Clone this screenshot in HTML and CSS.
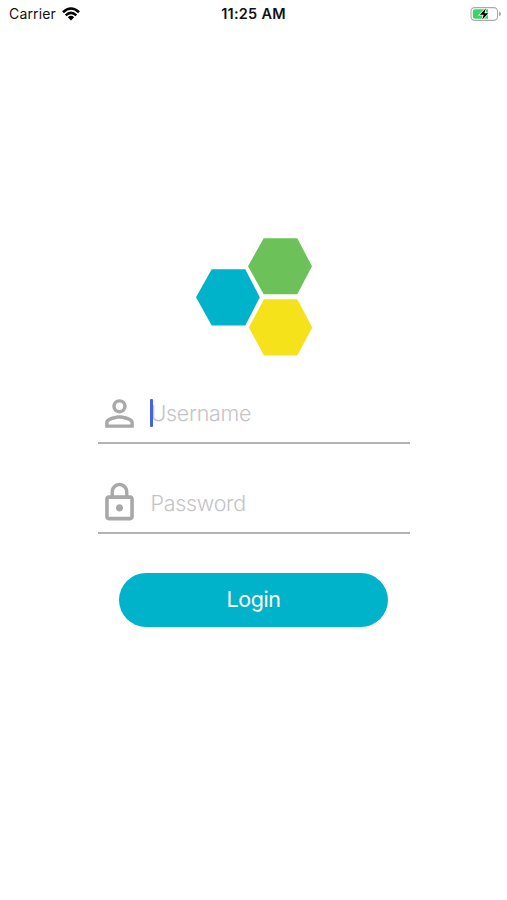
FILE: index.html
```
<!DOCTYPE html>
<html lang="en">
<head>
    <meta charset="UTF-8">
    <meta name="viewport" content="width=device-width, initial-scale=1.0">
    <title>Login</title>
    <link rel="stylesheet" href="styles.css">
</head>
<body>
    <!-- status bar -->
    <header class="status">
        <div class="carrier">
            <span class="carrier-name">Carrier</span>
            <svg class="wifi" viewBox="0 0 18 14">
                <path d="M1 5.2Q9-2.2 17 5.2" fill="none" stroke="#000" stroke-width="2.6"/>
                <path d="M3.7 8.3Q9 3.4 14.3 8.3" fill="none" stroke="#000" stroke-width="2.5"/>
                <path d="M9 13.4L5.8 10.2Q9 7.5 12.2 10.2z"/>
            </svg>
        </div>
        <span class="time">11:25 AM</span>
        <svg class="battery" viewBox="0 0 32 16">
            <rect x="1" y="1.6" width="26.5" height="12.8" rx="3.8" fill="#fff" stroke="#aaa" stroke-width="1.1"/>
            <path d="M5.2 3.2H18V12.8H5.2A2.4 2.4 0 0 1 2.8 10.4V5.6A2.4 2.4 0 0 1 5.2 3.2z" fill="#3fd268"/>
            <path d="M29 5.6Q31 6.6 31 8T29 10.4z" fill="#aaa"/>
            <path d="M15.9 2.2L9.8 8.7H13.7L12.1 13.8L18.4 7.3H14.4z" stroke="#fff" stroke-width="1.6" paint-order="stroke"/>
        </svg>
    </header>
    <main class="container">
        <svg class="logo" viewBox="0 0 118 120">
            <path d="M1 60.3L16.7 32.2H50.3L64.8 60.3L50.3 88.4H16.7z" fill="#00b2ca"/>
            <path d="M53 29.3L68.7 1.3H102.3L117 29.3L102.3 57.3H68.7z" fill="#6cc158"/>
            <path d="M53.8 90.5L69 62.3H102.3L117.3 90.5L102.3 118.5H69z" fill="#f5e21b"/>
        </svg>
        <form class="form">
            <label class="field">
                <svg class="icon" viewBox="0 0 24 24">
                    <path d="M12 5.9a2.1 2.1 0 1 1 0 4.2 2.1 2.1 0 0 1 0-4.2m0 9c2.97 0 6.1 1.46 6.1 2.1v1.1H5.9V17c0-.64 3.13-2.1 6.1-2.1M12 4C9.79 4 8 5.79 8 8s1.79 4 4 4 4-1.79 4-4-1.79-4-4-4zm0 9c-2.67 0-8 1.34-8 4v3h16v-3c0-2.66-5.33-4-8-4z"/>
                </svg>
                <span class="cursor"></span>
                <input class="input" type="text" placeholder="Username">
            </label>
            <label class="field">
                <svg class="icon" viewBox="0 0 24 24">
                    <path d="M12 17c1.1 0 2-.9 2-2s-.9-2-2-2-2 .9-2 2 .9 2 2 2zm6-9h-1V6c0-2.76-2.24-5-5-5S7 3.24 7 6v2H6c-1.1 0-2 .9-2 2v10c0 1.1.9 2 2 2h12c1.1 0 2-.9 2-2V10c0-1.1-.9-2-2-2zM8.9 6c0-1.71 1.39-3.1 3.1-3.1s3.1 1.39 3.1 3.1v2H8.9V6zM18 20H6V10h12v10z"/>
                </svg>
                <input class="input" type="password" placeholder="Password">
            </label>
            <button class="btn" type="button">Login</button>
        </form>
    </main>
</body>
</html>
```
FILE: styles.css
```
*{
    padding: 0;
    margin: 0;
    box-sizing: border-box;
}
body{
    height: 100vh;
    overflow: hidden;
    background-color: #fff;
    font-family: Inter, "Liberation Sans", sans-serif;
}
/* status bar */
.status{
    display: grid;
    grid-template-columns: 1fr auto 1fr;
    align-items: center;
    height: 27px;
    padding: 0 5px;
    font-size: 14px;
    color: #111;
}
.carrier{
    display: flex;
    align-items: center;
    gap: 6px;
    padding-left: 4px;
}
.carrier-name{
    letter-spacing: 0.15px;
}
.wifi{
    width: 18px;
    height: 14px;
}
.time{
    font-size: 14.5px;
    font-weight: 600;
    letter-spacing: 0.25px;
}
.battery{
    justify-self: end;
    width: 32px;
    height: 16px;
}
/* login */
.container{
    display: flex;
    flex-direction: column;
    align-items: center;
    padding-top: 210px;
}
.logo{
    width: 118px;
    height: 120px;
}
.form{
    display: flex;
    flex-direction: column;
    width: 312px;
    padding-top: 27px;
}
.field{
    display: flex;
    align-items: center;
    position: relative;
    height: 60px;
    margin-bottom: 29.5px;
    border-bottom: 2px solid #b3b3b3;
}
.icon{
    flex: none;
    width: 43px;
    height: 43px;
    fill: #a8a8a8;
}
.cursor{
    position: absolute;
    left: 52.5px;
    top: 15px;
    width: 2.5px;
    height: 28px;
    border-radius: 1px;
    background-color: #4565e0;
}
.input{
    flex: 1;
    min-width: 0;
    height: 40px;
    margin-left: 10px;
    border: none;
    outline: none;
    background: none;
    font-family: inherit;
    font-size: 21.5px;
    font-weight: 350;
    letter-spacing: -0.3px;
}
.input::placeholder{
    color: #c4c4c6;
}
.btn{
    align-self: center;
    width: 269px;
    height: 54px;
    margin-top: 9.5px;
    padding-bottom: 2px;
    border: none;
    border-radius: 27px;
    background-color: #00b2ca;
    color: #fff;
    font-family: inherit;
    font-size: 21.5px;
    font-weight: 400;
    letter-spacing: -0.4px;
}
```
